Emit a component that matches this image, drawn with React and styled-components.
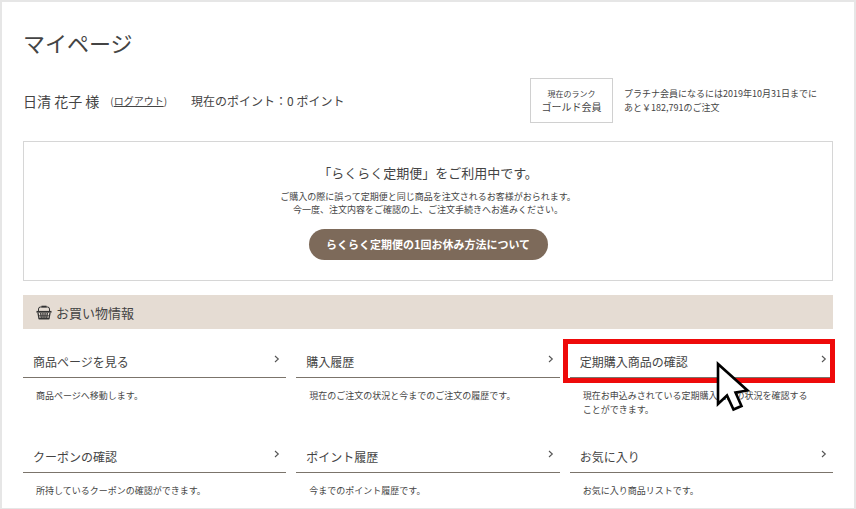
import styled, { createGlobalStyle } from "styled-components";

const GlobalStyle = createGlobalStyle`
  * {
    margin: 0;
    padding: 0;
    box-sizing: border-box;
  }
  body {
    font-family: "Noto Sans CJK JP", "Noto Sans", sans-serif;
    color: #444;
    background-color: #fff;
  }
  a {
    color: inherit;
    text-decoration: none;
  }
`;

const Page = styled.main`
  min-height: 100vh;
  padding: 22px 21px 8px;
  border: 2px solid #e6e6e6;
  border-bottom-width: 1px;
`;

const Title = styled.h1`
  font-size: 22px;
  font-weight: 400;
  line-height: 36px;
`;

const Profile = styled.div`
  display: flex;
  align-items: center;
  margin-top: 18px;
`;

const Name = styled.p`
  font-size: 14px;
  line-height: 20px;
`;

const Logout = styled.p`
  margin-left: 11px;
  font-size: 10px;
  line-height: 16px;

  a {
    text-decoration: underline;
  }
`;

const Points = styled.p`
  margin-left: 24px;
  font-size: 12px;
  line-height: 20px;
`;

const Rank = styled.div`
  display: flex;
  flex-direction: column;
  align-items: center;
  justify-content: center;
  width: 83px;
  height: 45px;
  margin-left: auto;
  border: 1px solid #d0d0d0;
  font-size: 10px;
  line-height: 14px;

  small {
    font-size: 8px;
    line-height: 12px;
  }
`;

const RankNote = styled.p`
  width: 209px;
  margin-left: 11px;
  font-size: 9px;
  line-height: 14px;
`;

const Notice = styled.section`
  display: flex;
  flex-direction: column;
  align-items: center;
  margin-top: 18px;
  padding: 20px;
  border: 1px solid #d6d6d6;
  text-align: center;

  h2 {
    font-size: 13px;
    font-weight: 400;
    line-height: 22px;
  }
  p {
    margin-top: 6px;
    font-size: 9px;
    line-height: 13px;
  }
`;

const PillLink = styled.a`
  margin-top: 13px;
  padding: 0 14px;
  min-width: 239px;
  border-radius: 16px;
  background-color: #7d6a5a;
  color: #fff;
  font-size: 11px;
  font-weight: 700;
  line-height: 31px;
`;

const SectionBar = styled.h2`
  display: flex;
  align-items: center;
  gap: 4px;
  height: 34px;
  margin-top: 14px;
  padding: 0 13px;
  background-color: #e5dcd3;
  font-size: 13px;
  font-weight: 400;
`;

const Menu = styled.ul`
  display: grid;
  grid-template-columns: repeat(3, 1fr);
  column-gap: 10px;
  row-gap: 22px;
  margin-top: 15px;
  list-style: none;
`;

const Item = styled.li`
  position: relative;

  p {
    margin-top: 11px;
    padding: 0 20px 0 13px;
    font-size: 9px;
    line-height: 14px;
  }
`;

const ItemLink = styled.a`
  position: relative;
  display: flex;
  align-items: center;
  justify-content: space-between;
  height: 34px;
  padding: 2px 6px 0 10px;
  border-bottom: 1px solid #7b746b;
  font-size: 12px;

  svg {
    margin-bottom: 6px;
  }
  &::after {
    content: "";
    display: ${(props) => (props.$marked ? "block" : "none")};
    position: absolute;
    inset: -5px -2px -6px -7px;
    border: 5px solid #ee0a0a;
  }
`;

const Pointer = styled.svg`
  position: absolute;
  top: 14px;
  left: 144px;
`;

const BasketIcon = () => (
  <svg width="16" height="15" viewBox="0 0 16 15" fill="none" stroke="#333">
    <path d="M2.5 6V4Q2.5 2 4.5 2H11.5Q13.5 2 13.5 4V6" strokeWidth="1" />
    <path d="M5.5 1.5H10.5" strokeWidth="1.6" />
    <path d="M0.5 6.8H15.5" strokeWidth="1.8" />
    <path
      d="M2 8L3 13.7H13L14 8M4.7 8L5.3 13.5M6.9 8L7.1 13.5M9.1 8L8.9 13.5M11.3 8L10.7 13.5"
      strokeWidth="1.3"
    />
    <path d="M2.4 10.7H13.6" strokeWidth="0.7" />
    <path d="M3 13.6H13" strokeWidth="1.4" />
  </svg>
);

const Chevron = () => (
  <svg width="6" height="8" viewBox="0 0 6 8" fill="none" stroke="#555">
    <path d="M1 1L4.3 4L1 7" strokeWidth="1.1" />
  </svg>
);

const PointerIcon = () => (
  <Pointer width="38" height="56" viewBox="0 0 38 56" aria-hidden="true">
    <path
      d="M4 6V46L13 37.5L19.5 51.5L27.5 48L21.5 34.5L33.5 32.5Z"
      fill="#fff"
      stroke="#000"
      strokeWidth="2.6"
    />
  </Pointer>
);

const items = [
  { title: "商品ページを見る", text: "商品ページへ移動します。" },
  { title: "購入履歴", text: "現在のご注文の状況と今までのご注文の履歴です。" },
  {
    title: "定期購入商品の確認",
    text: "現在お申込みされている定期購入商品の状況を確認することができます。",
    marked: true,
  },
  { title: "クーポンの確認", text: "所持しているクーポンの確認ができます。" },
  { title: "ポイント履歴", text: "今までのポイント履歴です。" },
  { title: "お気に入り", text: "お気に入り商品リストです。" },
];

const App = () => {
  return (
    <>
      <GlobalStyle />
      <Page lang="ja">
        <Title>マイページ</Title>
        <Profile>
          <Name>日清 花子 様</Name>
          <Logout>
            (<a href="#logout">ログアウト</a>)
          </Logout>
          <Points>現在のポイント：0 ポイント</Points>
          <Rank>
            <small>現在のランク</small>
            <span>ゴールド会員</span>
          </Rank>
          <RankNote>
            プラチナ会員になるには2019年10月31日までに
            <br />
            あと￥182,791のご注文
          </RankNote>
        </Profile>
        <Notice>
          <h2>「らくらく定期便」をご利用中です。</h2>
          <p>
            ご購入の際に誤って定期便と同じ商品を注文されるお客様がおられます。
            <br />
            今一度、注文内容をご確認の上、ご注文手続きへお進みください。
          </p>
          <PillLink href="#skip">らくらく定期便の1回お休み方法について</PillLink>
        </Notice>
        <SectionBar>
          <BasketIcon />
          お買い物情報
        </SectionBar>
        <Menu>
          {items.map((item) => (
            <Item key={item.title}>
              <ItemLink href="#item" $marked={item.marked}>
                {item.title}
                <Chevron />
              </ItemLink>
              <p>{item.text}</p>
              {item.marked && <PointerIcon />}
            </Item>
          ))}
        </Menu>
      </Page>
    </>
  );
};

export default App;
